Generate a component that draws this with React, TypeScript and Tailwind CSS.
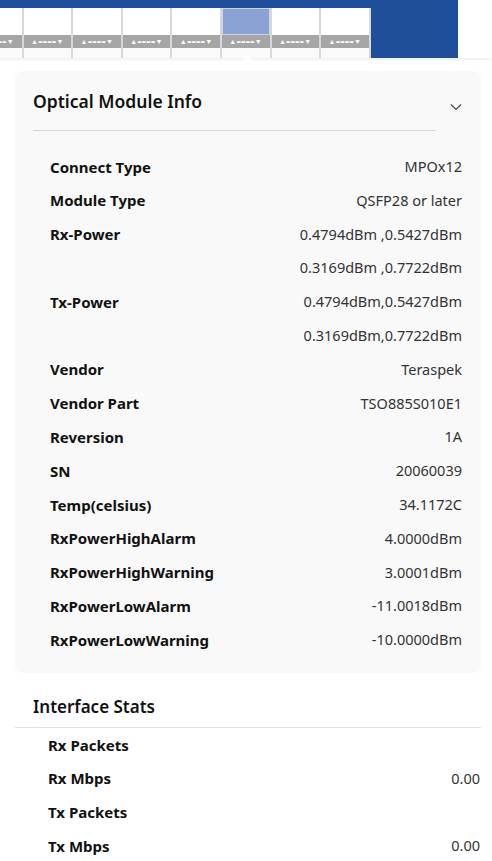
import React from "react";

type Row = { label: string; value?: string };

const moduleRows: Row[] = [
  { label: "Connect Type", value: "MPOx12" },
  { label: "Module Type", value: "QSFP28 or later" },
  { label: "Rx-Power", value: "0.4794dBm ,0.5427dBm" },
  { label: "", value: "0.3169dBm ,0.7722dBm" },
  { label: "Tx-Power", value: "0.4794dBm,0.5427dBm" },
  { label: "", value: "0.3169dBm,0.7722dBm" },
  { label: "Vendor", value: "Teraspek" },
  { label: "Vendor Part", value: "TSO885S010E1" },
  { label: "Reversion", value: "1A" },
  { label: "SN", value: "20060039" },
  { label: "Temp(celsius)", value: "34.1172C" },
  { label: "RxPowerHighAlarm", value: "4.0000dBm" },
  { label: "RxPowerHighWarning", value: "3.0001dBm" },
  { label: "RxPowerLowAlarm", value: "-11.0018dBm" },
  { label: "RxPowerLowWarning", value: "-10.0000dBm" },
];

const statRows: Row[] = [
  { label: "Rx Packets" },
  { label: "Rx Mbps", value: "0.00" },
  { label: "Tx Packets" },
  { label: "Tx Mbps", value: "0.00" },
];

const ports = [0, 1, 2, 3, 4, 5, 6, 7];

const PortStrip: React.FC = () => {
  return (
    <div className="relative shadow-[0_2px_3px_rgba(0,0,0,0.06)]">
      <div className="w-[458px] h-[58px] bg-[#1f4e9a] overflow-hidden pt-[8px]">
        <div className="flex -ml-[26px] w-[397px]">
          {ports.map((p) => (
            <div key={p} className="w-[49.6px] shrink-0 flex flex-col border-r-2 border-[#d8d8d8]">
              <div className={p === 5 ? "h-[27px] bg-[#8aa2d4] border border-[#c9d3ea]" : "h-[27px] bg-white"} />
              <div className="h-[13px] bg-[#a6a6a6] flex items-center justify-center text-white text-[7px] font-bold leading-none tracking-[0.5px]">
                ▲====▼
              </div>
              <div className="h-[12px] bg-[#fafafa]" />
            </div>
          ))}
        </div>
      </div>
      <div className="absolute left-[243px] top-[56px] w-[7px] h-[7px] bg-white" />
    </div>
  );
};

const Chevron: React.FC = () => (
  <svg width="12" height="8" viewBox="0 0 12 8" className="text-[#444]">
    <path d="M1 1.5 L6 6.5 L11 1.5" fill="none" stroke="currentColor" strokeWidth="1.2" />
  </svg>
);

export default function App() {
  return (
    <div className="w-[492px] min-h-[861px] bg-white text-[#111] font-['Noto_Sans',sans-serif]">
      <PortStrip />

      <div className="ml-[15px] w-[466px] mt-[13px] rounded-lg bg-[#f9f9f9] pb-[16px]">
        <div className="flex items-start pl-[18px] pr-[19px]">
          <div className="w-[403px] border-b border-[#d6d6d6] pt-[17px] pb-[16px]">
            <h2 className="text-[17.5px] leading-[26px] font-semibold">Optical Module Info</h2>
          </div>
          <div className="ml-auto mt-[32px]">
            <Chevron />
          </div>
        </div>
        <div className="pt-[19px] pl-[35px] pr-[19px]">
          {moduleRows.map((r, i) => (
            <div key={i} className="h-[33.8px] flex items-center justify-between">
              <span className="font-bold text-[15px]">{r.label}</span>
              <span className="text-[#333] text-[14.5px]">{r.value}</span>
            </div>
          ))}
        </div>
      </div>

      <div className="ml-[15px] w-[466px] mt-[21px]">
        <div className="border-b border-[#e2e2e2] pl-[18px] pb-[7px]">
          <h2 className="text-[17px] leading-[26px] font-semibold">Interface Stats</h2>
        </div>
        <div className="pl-[33px] pr-[1px]">
          {statRows.map((r, i) => (
            <div key={i} className="h-[33.7px] flex items-center justify-between">
              <span className="font-bold text-[15px]">{r.label}</span>
              <span className="text-[#333] text-[14.5px]">{r.value}</span>
            </div>
          ))}
        </div>
      </div>
    </div>
  );
}
